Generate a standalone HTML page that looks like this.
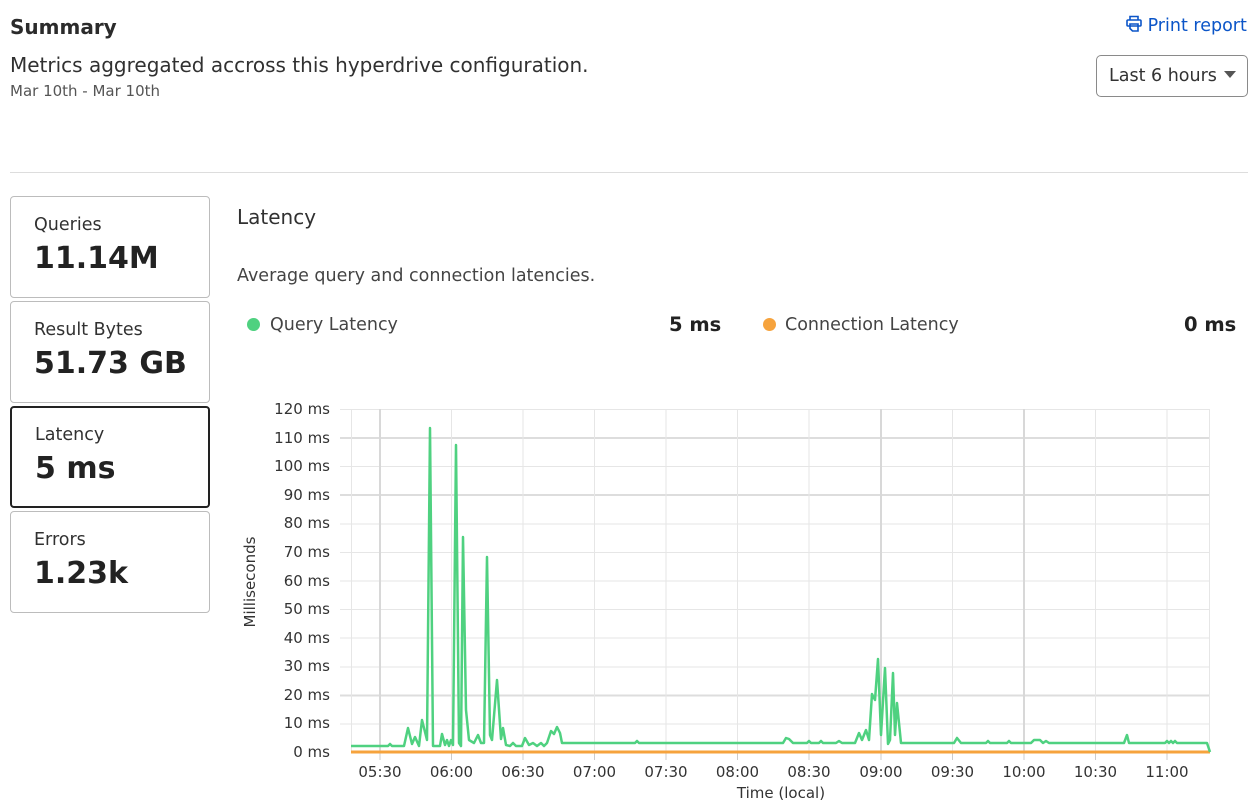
<!DOCTYPE html>
<html><head><meta charset="utf-8"><style>
*{margin:0;padding:0;box-sizing:border-box}
body{width:1256px;height:811px;background:#fff;font-family:"DejaVu Sans","Liberation Sans",sans-serif;color:#313131;position:relative;overflow:hidden}
.a{position:absolute;white-space:nowrap}
.card{position:absolute;left:10px;width:200px;height:102px;border:1px solid #bcbcbc;border-radius:4px}
.card .l{position:absolute;left:23px;top:18px;font-size:17.5px;color:#313131}
.card .v{position:absolute;left:23px;top:44px;font-size:30px;font-weight:bold;color:#222}
</style></head><body>
<div class="a" style="left:10px;top:15px;font-size:20px;font-weight:bold;color:#2b2b2b">Summary</div>
<div class="a" style="left:10px;top:53px;font-size:20px">Metrics aggregated accross this hyperdrive configuration.</div>
<div class="a" style="left:10px;top:82px;font-size:15px;color:#555">Mar 10th - Mar 10th</div>
<div class="a" style="left:1126px;top:15px;font-size:17.5px;color:#0b55c8">
<svg width="16" height="18" viewBox="0 0 16 18" style="vertical-align:-2px"><g fill="none" stroke="#0b55c8" stroke-width="1.6"><path d="M4 5V1.5h8V5"/><rect x="1" y="5" width="14" height="6" rx="1"/><path d="M4 9h8v7H6.5L4 13.5z"/></g></svg> Print report</div>
<div class="a" style="left:1096px;top:55px;width:152px;height:42px;border:1px solid #8a8a8a;border-radius:5px;font-size:17.5px;padding:10px 0 0 12px;color:#333">Last 6 hours <span style="display:inline-block;width:0;height:0;border-left:6px solid transparent;border-right:6px solid transparent;border-top:7px solid #555;vertical-align:3px;margin-left:2px"></span></div>
<div class="a" style="left:10px;top:172px;width:1238px;height:1px;background:#ddd"></div>

<div class="card" style="top:196px"><div class="l">Queries</div><div class="v">11.14M</div></div>
<div class="card" style="top:301px"><div class="l">Result Bytes</div><div class="v">51.73 GB</div></div>
<div class="card" style="top:406px;border:2px solid #222"><div class="l" style="left:23px;top:17px">Latency</div><div class="v" style="left:23px;top:43px">5 ms</div></div>
<div class="card" style="top:511px"><div class="l">Errors</div><div class="v">1.23k</div></div>

<div class="a" style="left:237px;top:205px;font-size:20px">Latency</div>
<div class="a" style="left:237px;top:266px;font-size:17.5px;color:#444">Average query and connection latencies.</div>
<div class="a" style="left:247px;top:318px;width:13px;height:13px;border-radius:50%;background:#4fd180"></div>
<div class="a" style="left:270px;top:315px;font-size:17.5px;color:#444">Query Latency</div>
<div class="a" style="left:669px;top:313px;font-size:19.5px;font-weight:bold;color:#222">5 ms</div>
<div class="a" style="left:763px;top:318px;width:13px;height:13px;border-radius:50%;background:#f6a33d"></div>
<div class="a" style="left:785px;top:315px;font-size:17.5px;color:#444">Connection Latency</div>
<div class="a" style="left:1184px;top:313px;font-size:19.5px;font-weight:bold;color:#222">0 ms</div>

<svg class="a" style="left:0;top:0" width="1256" height="811" font-family="DejaVu Sans,sans-serif" font-size="15" fill="#333">
<g stroke="#e6e6e6" stroke-width="1">
<line x1="340" y1="409.5" x2="1210" y2="409.5"/>
<line x1="340" y1="438" x2="1210" y2="438" stroke="#ddd" stroke-width="2"/>
<line x1="340" y1="466.5" x2="1210" y2="466.5"/>
<line x1="340" y1="495" x2="1210" y2="495" stroke="#ddd" stroke-width="2"/>
<line x1="340" y1="524" x2="1210" y2="524"/>
<line x1="340" y1="552.5" x2="1210" y2="552.5"/>
<line x1="340" y1="581" x2="1210" y2="581"/>
<line x1="340" y1="609.5" x2="1210" y2="609.5"/>
<line x1="340" y1="638" x2="1210" y2="638"/>
<line x1="340" y1="667" x2="1210" y2="667"/>
<line x1="340" y1="695.5" x2="1210" y2="695.5" stroke="#ddd" stroke-width="2"/>
<line x1="340" y1="724" x2="1210" y2="724"/>
<line x1="351.5" y1="409" x2="351.5" y2="752"/>
<line x1="380" y1="409" x2="380" y2="752" stroke="#d8d8d8" stroke-width="2"/>
<line x1="451.5" y1="409" x2="451.5" y2="752"/>
<line x1="523" y1="409" x2="523" y2="752"/>
<line x1="594.5" y1="409" x2="594.5" y2="752"/>
<line x1="666" y1="409" x2="666" y2="752"/>
<line x1="737.5" y1="409" x2="737.5" y2="752"/>
<line x1="809" y1="409" x2="809" y2="752"/>
<line x1="881" y1="409" x2="881" y2="752" stroke="#d8d8d8" stroke-width="2"/>
<line x1="952.5" y1="409" x2="952.5" y2="752"/>
<line x1="1024" y1="409" x2="1024" y2="752" stroke="#d8d8d8" stroke-width="2"/>
<line x1="1095.5" y1="409" x2="1095.5" y2="752"/>
<line x1="1167" y1="409" x2="1167" y2="752"/>
<line x1="1209.5" y1="409" x2="1209.5" y2="752"/>
</g>
<g stroke="#ccc" stroke-width="1">
<line x1="380" y1="752" x2="380" y2="760"/><line x1="451.5" y1="752" x2="451.5" y2="760"/><line x1="523" y1="752" x2="523" y2="760"/><line x1="594.5" y1="752" x2="594.5" y2="760"/><line x1="666" y1="752" x2="666" y2="760"/><line x1="737.5" y1="752" x2="737.5" y2="760"/><line x1="809" y1="752" x2="809" y2="760"/><line x1="881" y1="752" x2="881" y2="760"/><line x1="952.5" y1="752" x2="952.5" y2="760"/><line x1="1024" y1="752" x2="1024" y2="760"/><line x1="1095.5" y1="752" x2="1095.5" y2="760"/><line x1="1167" y1="752" x2="1167" y2="760"/>
</g>
<g text-anchor="end">
<text x="330" y="414">120 ms</text><text x="330" y="443">110 ms</text><text x="330" y="471">100 ms</text><text x="330" y="500">90 ms</text><text x="330" y="528">80 ms</text><text x="330" y="557">70 ms</text><text x="330" y="586">60 ms</text><text x="330" y="614">50 ms</text><text x="330" y="643">40 ms</text><text x="330" y="671">30 ms</text><text x="330" y="700">20 ms</text><text x="330" y="728">10 ms</text><text x="330" y="757">0 ms</text>
</g>
<g text-anchor="middle">
<text x="380" y="777">05:30</text><text x="451.5" y="777">06:00</text><text x="523" y="777">06:30</text><text x="594.5" y="777">07:00</text><text x="666" y="777">07:30</text><text x="737.5" y="777">08:00</text><text x="809" y="777">08:30</text><text x="881" y="777">09:00</text><text x="952.5" y="777">09:30</text><text x="1024" y="777">10:00</text><text x="1095.5" y="777">10:30</text><text x="1167" y="777">11:00</text>
<text x="781" y="798">Time (local)</text>
<text transform="translate(255,582) rotate(-90)">Milliseconds</text>
</g>
<line x1="351" y1="752" x2="1210" y2="752" stroke="#f6a33d" stroke-width="3"/>
<polyline fill="none" stroke="#4fd180" stroke-width="2.5" stroke-linejoin="round" points="351,746 388,746 390,744 392,746 404,746 408,728 412,744 415,737 419,746 422,720 427,740 430,428 433,746 440,746 442,734 445,745 447,740 449,746 451,740 453,745 456,445 459,743 461,746 463,537 466,710 469,740 474,743 478,735 481,743 484,743 487,557 490,735 492,740 497,680 501,739 503,728 506,745 510,746 513,743 516,746 522,746 525,738 529,745 533,743 537,746 541,743 544,746 547,743 551,731 554,734 557,727 560,733 562,743 635,743 637,741 639,743 783,743 786,738 789,739 793,743 807,743 809,741 811,743 819,743 821,741 823,743 836,743 839,741 842,743 855,743 859,733 862,740 866,730 869,740 872,694 875,700 878,659 881,735 885,668 888,744 890,740 893,673 895,735 897,703 901,743 954,743 957,738 961,743 986,743 988,741 990,743 1007,743 1009,741 1011,743 1031,743 1034,740 1040,740 1043,743 1046,741 1049,743 1124,743 1127,735 1129,743 1165,743 1167,741 1169,743 1171,741 1173,743 1175,741 1177,743 1207,743 1210,752"/>
</svg>
</body></html>
